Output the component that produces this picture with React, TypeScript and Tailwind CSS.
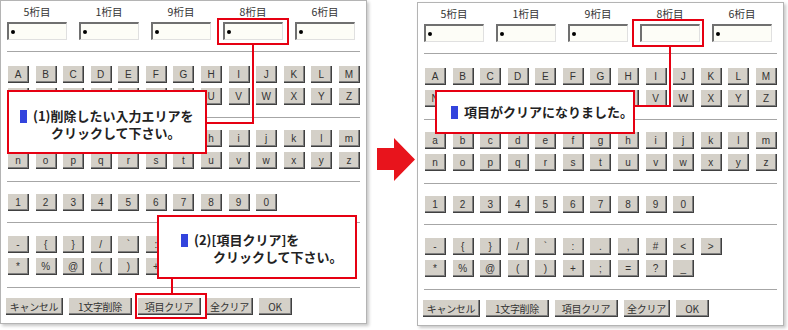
import React from "react";

const jp = "font-['Noto_Sans_CJK_JP','Noto_Sans',sans-serif]";
const key =
  "flex items-center justify-center h-[18px] bg-[#d4d0c8] text-[#333] text-[10px] font-['Liberation_Sans',sans-serif] shadow-[inset_1px_1px_#ffffff,inset_-1px_-1px_#404040,inset_-2px_-2px_#808080]";

const digitLabels = ["5桁目", "1桁目", "9桁目", "8桁目", "6桁目"];

const rows: string[][] = [
  "ABCDEFGHIJKLM".split(""),
  "NOPQRSTUVWXYZ".split(""),
];
const lowerRows: string[][] = [
  "abcdefghijklm".split(""),
  "nopqrstuvwxyz".split(""),
];
const digitRow = "1234567890".split("");
const symbolRows: string[][] = [
  ["-", "{", "}", "/", "`", ":", ".", ",", "#", "<", ">"],
  ["*", "%", "@", "(", ")", "+", ";", "=", "?", "_"],
];

const bottomButtons = [
  { label: "キャンセル", w: "w-[58px]" },
  { label: "1文字削除", w: "w-[64px]" },
  { label: "項目クリア", w: "w-[64px]" },
  { label: "全クリア", w: "w-[47px]" },
  { label: "OK", w: "w-[34px]" },
];

function Rule() {
  return <div className="h-[2px] w-[353px] border-t border-[#a6a6a6] border-b border-b-white" />;
}

function KeyGrid({ lines }: { lines: string[][] }) {
  return (
    <div className="grid grid-cols-[repeat(13,22px)] gap-x-[5.58px] gap-y-[4px]">
      {lines.map((line, i) =>
        line.map((k, j) => (
          <div key={`${i}-${j}`} className={key} style={{ gridRow: i + 1, gridColumn: j + 1 }}>
            {k}
          </div>
        )),
      )}
    </div>
  );
}

function Panel({ cleared, children }: { cleared: boolean; children?: React.ReactNode }) {
  return (
    <div className="relative flex flex-col w-[367px] h-[324px] bg-white border border-[#b4b4b4] shadow-[2px_2px_3px_rgba(0,0,0,0.22)] pl-[6px] pt-[4px]">
      <div className="grid grid-cols-[repeat(5,60px)] gap-x-[12px]">
        {digitLabels.map((l) => (
          <div key={l} className={`h-[14px] text-center text-[10.5px] leading-[14px] text-[#333] ${jp}`}>
            {l}
          </div>
        ))}
        {digitLabels.map((l, i) => (
          <div
            key={l + "in"}
            className="mt-[3px] flex items-center h-[18px] bg-[#fdfdf7] border-t-2 border-l-2 border-[#707070] border-r border-b border-r-[#e0e0e0] border-b-[#e0e0e0] pl-[2px]"
          >
            {!(cleared && i === 3) && <span className="block w-[4px] h-[4px] rounded-full bg-black" />}
          </div>
        ))}
      </div>
      <div className="mt-[11px]">
        <Rule />
      </div>
      <div className="mt-[12px]">
        <KeyGrid lines={rows} />
      </div>
      <div className="mt-[12px]">
        <Rule />
      </div>
      <div className="mt-[10px]">
        <KeyGrid lines={lowerRows} />
      </div>
      <div className="mt-[12px]">
        <Rule />
      </div>
      <div className="mt-[10px]">
        <KeyGrid lines={[digitRow]} />
      </div>
      <div className="mt-[11px]">
        <Rule />
      </div>
      <div className="mt-[11px]">
        <KeyGrid lines={symbolRows} />
      </div>
      <div className="mt-[12px]">
        <Rule />
      </div>
      <div className="mt-[8px] -ml-[2px] flex gap-x-[5px]">
        {bottomButtons.map((b) => (
          <div key={b.label} className={`${key} ${b.w} whitespace-nowrap text-[10px] tracking-[-0.3px] ${jp}`}>
            {b.label}
          </div>
        ))}
      </div>
      {children}
    </div>
  );
}

function Square() {
  return <span className="inline-block w-[7px] h-[13px] bg-[#3344dd] mr-[6px] align-[-2px]" />;
}

function Callout({ className, children }: { className: string; children: React.ReactNode }) {
  return (
    <div
      className={`absolute bg-white border-2 border-[#e60012] text-[13px] font-bold leading-[17px] text-[#222] ${jp} ${className}`}
    >
      {children}
    </div>
  );
}

export default function App() {
  return (
    <div className="flex items-start w-[788px] h-[330px] bg-white">
      <Panel cleared={false}>
        <div className="absolute left-[216px] top-[17px] w-[72px] h-[27px] border-2 border-[#e60012]" />
        <div className="absolute left-[251px] top-[42px] w-[2px] h-[81px] bg-[#e60012]" />
        <div className="absolute left-[204px] top-[121px] w-[49px] h-[2px] bg-[#e60012]" />
        <Callout className="left-[6px] top-[89px] w-[200px] h-[64px] pl-[11px] pt-[15px]">
          <div className="whitespace-nowrap">
            <Square />
            (1)削除したい入力エリアを
          </div>
          <div className="pl-[31px]">クリックして下さい。</div>
        </Callout>
        <div className="absolute left-[170px] top-[276px] w-[2px] h-[18px] bg-[#e60012]" />
        <Callout className="left-[156px] top-[214px] w-[200px] h-[64px] pl-[22px] pt-[14px]">
          <div className="whitespace-nowrap">
            <Square />
            (2)[項目クリア]を
          </div>
          <div className="pl-[32px]">クリックして下さい。</div>
        </Callout>
        <div className="absolute left-[134px] top-[292px] w-[72px] h-[26px] border-2 border-[#e60012]" />
      </Panel>

      <div className="w-[50px] flex justify-center pt-[138px]">
        <svg width="38" height="43" viewBox="0 0 38 43" className="ml-[8px]">
          <polygon points="0,10 17,10 17,0 38,21.5 17,43 17,32 0,32" fill="#e8141c" />
        </svg>
      </div>

      <div className="mt-[2px]">
        <Panel cleared={true}>
          <div className="absolute left-[214px] top-[16px] w-[72px] h-[28px] border-2 border-[#e60012]" />
          <div className="absolute left-[251px] top-[42px] w-[2px] h-[62px] bg-[#e60012]" />
          <div className="absolute left-[215px] top-[102px] w-[38px] h-[2px] bg-[#e60012]" />
          <Callout className="left-[17px] top-[87px] w-[200px] h-[44px] pl-[14px] pt-[11px]">
            <div className="whitespace-nowrap">
              <Square />
              項目がクリアになりました。
            </div>
          </Callout>
        </Panel>
      </div>
    </div>
  );
}
